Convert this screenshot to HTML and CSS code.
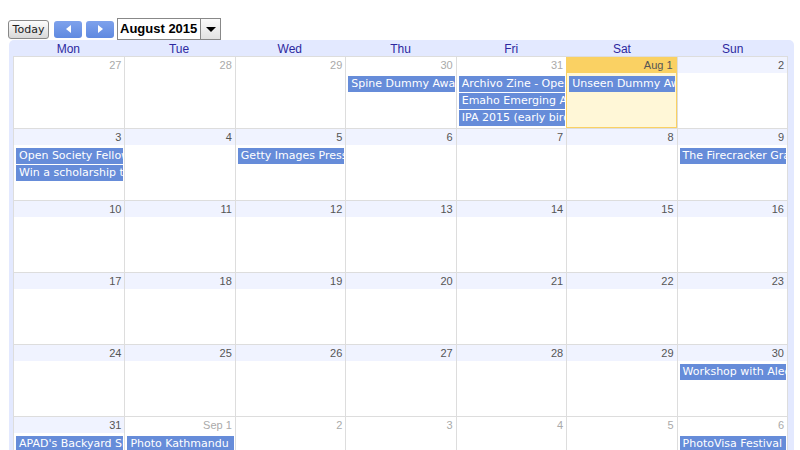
FILE: index.html
```html
<!DOCTYPE html>
<html lang="en">
<head>
<meta charset="UTF-8">
<title>Calendar - August 2015</title>
<link rel="stylesheet" href="styles.css">
</head>
<body>

<div class="toolbar">
  <button class="today-btn">Today</button>
  <button class="nav-btn"><span class="arrow-left"></span></button>
  <button class="nav-btn"><span class="arrow-right"></span></button>
  <div class="month-picker">
    <span class="month-label">August 2015</span>
    <span class="month-drop"><span class="arrow-down"></span></span>
  </div>
</div>

<div class="frame">
  <div class="daynames">
    <div>Mon</div><div>Tue</div><div>Wed</div><div>Thu</div><div>Fri</div><div>Sat</div><div>Sun</div>
  </div>
  <div class="grid">
    <div class="week">
      <div class="day other"><div class="date">27</div></div>
      <div class="day other"><div class="date">28</div></div>
      <div class="day other"><div class="date">29</div></div>
      <div class="day other"><div class="date">30</div>
        <div class="event">Spine Dummy Awards 2015</div></div>
      <div class="day other"><div class="date">31</div>
        <div class="event">Archivo Zine - Open Call</div>
        <div class="event">Emaho Emerging Artist Award</div>
        <div class="event">IPA 2015 (early bird)</div></div>
      <div class="day today"><div class="date">Aug 1</div>
        <div class="event">Unseen Dummy Award</div></div>
      <div class="day"><div class="date">2</div></div>
    </div>
    <div class="week">
      <div class="day"><div class="date">3</div>
        <div class="event">Open Society Fellowship</div>
        <div class="event">Win a scholarship to</div></div>
      <div class="day"><div class="date">4</div></div>
      <div class="day"><div class="date">5</div>
        <div class="event">Getty Images Press Grant</div></div>
      <div class="day"><div class="date">6</div></div>
      <div class="day"><div class="date">7</div></div>
      <div class="day"><div class="date">8</div></div>
      <div class="day"><div class="date">9</div>
        <div class="event">The Firecracker Grant</div></div>
    </div>
    <div class="week">
      <div class="day"><div class="date">10</div></div>
      <div class="day"><div class="date">11</div></div>
      <div class="day"><div class="date">12</div></div>
      <div class="day"><div class="date">13</div></div>
      <div class="day"><div class="date">14</div></div>
      <div class="day"><div class="date">15</div></div>
      <div class="day"><div class="date">16</div></div>
    </div>
    <div class="week">
      <div class="day"><div class="date">17</div></div>
      <div class="day"><div class="date">18</div></div>
      <div class="day"><div class="date">19</div></div>
      <div class="day"><div class="date">20</div></div>
      <div class="day"><div class="date">21</div></div>
      <div class="day"><div class="date">22</div></div>
      <div class="day"><div class="date">23</div></div>
    </div>
    <div class="week">
      <div class="day"><div class="date">24</div></div>
      <div class="day"><div class="date">25</div></div>
      <div class="day"><div class="date">26</div></div>
      <div class="day"><div class="date">27</div></div>
      <div class="day"><div class="date">28</div></div>
      <div class="day"><div class="date">29</div></div>
      <div class="day"><div class="date">30</div>
        <div class="event">Workshop with Alec Soth</div></div>
    </div>
    <div class="week">
      <div class="day"><div class="date">31</div>
        <div class="event">APAD's Backyard Shoot</div></div>
      <div class="day other"><div class="date">Sep 1</div>
        <div class="event">Photo Kathmandu</div></div>
      <div class="day other"><div class="date">2</div></div>
      <div class="day other"><div class="date">3</div></div>
      <div class="day other"><div class="date">4</div></div>
      <div class="day other"><div class="date">5</div></div>
      <div class="day other"><div class="date">6</div>
        <div class="event">PhotoVisa Festival</div></div>
    </div>
  </div>
</div>

</body>
</html>
```

FILE: styles.css
```css
html, body {
  overflow: hidden;
}
body {
  margin: 0;
  padding: 18px 6px 0 8px;
  font-family: Arial, "Liberation Sans", sans-serif;
  background-color: #fff;
}
.toolbar {
  display: flex;
  align-items: center;
  height: 22px;
}
.today-btn {
  width: 41px;
  height: 19px;
  padding: 0;
  margin-right: 5px;
  font-family: "DejaVu Sans", sans-serif;
  font-size: 11px;
  color: #222;
  background: linear-gradient(#fdfdfd, #d8d8d8);
  border: 1px solid #888;
  border-radius: 3px;
}
.nav-btn {
  width: 28px;
  height: 17px;
  padding: 0;
  margin-right: 4px;
  background: linear-gradient(#7ea2ec, #5f89e0);
  border: none;
  border-radius: 3px;
  display: flex;
  align-items: center;
  justify-content: center;
}
.arrow-left {
  width: 0;
  height: 0;
  border-top: 4px solid transparent;
  border-bottom: 4px solid transparent;
  border-right: 5px solid #fff;
}
.arrow-right {
  width: 0;
  height: 0;
  border-top: 4px solid transparent;
  border-bottom: 4px solid transparent;
  border-left: 5px solid #fff;
}
.month-picker {
  display: flex;
  height: 20px;
  border: 1px solid #888;
  margin-left: -1px;
}
.month-label {
  width: 80px;
  padding-left: 2px;
  font-size: 13px;
  font-weight: bold;
  line-height: 20px;
  white-space: nowrap;
  overflow: hidden;
  color: #000;
  background-color: #fff;
}
.month-drop {
  width: 19px;
  border-left: 1px solid #888;
  background: linear-gradient(#fafafa, #e2e2e2);
  display: flex;
  align-items: center;
  justify-content: center;
}
.arrow-down {
  width: 0;
  height: 0;
  border-left: 5px solid transparent;
  border-right: 5px solid transparent;
  border-top: 5px solid #000;
  margin-top: 1px;
}
.frame {
  margin-left: 1px;
  background-color: #e3e9ff;
  border-radius: 5px 5px 0 0;
  padding: 0 6px 0 4px;
}
.daynames {
  display: grid;
  grid-template-columns: repeat(7, 1fr);
  height: 16px;
}
.daynames div {
  text-align: center;
  font-size: 12px;
  line-height: 19px;
  color: #2c28a0;
}
.grid {
  background-color: #fff;
  border-left: 1px solid #ddd;
  border-right: 1px solid #ddd;
}
.week {
  display: grid;
  grid-template-columns: repeat(7, 1fr);
  height: 71px;
  border-top: 1px solid #ddd;
}
.day {
  border-left: 1px solid #ddd;
  overflow: hidden;
  min-width: 0;
}
.day:first-child {
  border-left: none;
}
.date {
  height: 16px;
  line-height: 17px;
  padding-right: 3px;
  text-align: right;
  font-size: 11px;
  color: #555;
  background-color: #f0f3ff;
}
.other .date {
  color: #aaa;
  background-color: #fff;
}
.today {
  background-color: #fff7d7;
  border: 1px solid #fad163;
  border-top: none;
}
.today .date {
  color: #555;
  background-color: #fad163;
}
.event {
  margin: 1px 1px 0 2px;
  height: 16px;
  line-height: 16px;
  padding-left: 3px;
  font-family: "DejaVu Sans", sans-serif;
  font-size: 11px;
  color: #fff;
  background-color: #668cd9;
  white-space: nowrap;
  overflow: hidden;
}
.date + .event {
  margin-top: 3px;
}
```
